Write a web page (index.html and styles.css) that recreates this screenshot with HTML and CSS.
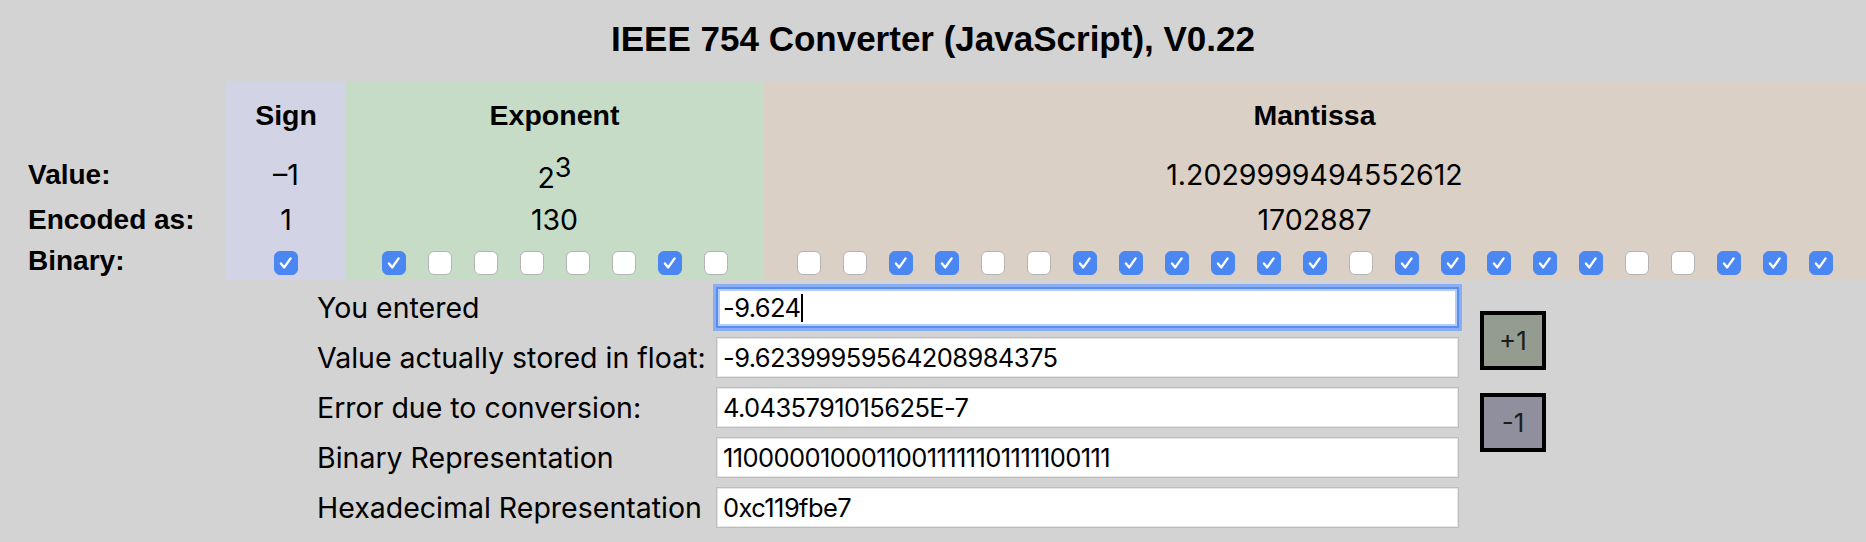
FILE: index.html
```html
<!DOCTYPE html>
<html lang="en">
<head>
<meta charset="utf-8">
<title>IEEE 754 Converter</title>
<link rel="stylesheet" href="styles.css">
</head>
<body>
<h1 class="title">IEEE 754 Converter (JavaScript), V0.22</h1>

<div class="bits">
  <div class="lbl"></div>
  <div class="cell sign head">Sign</div>
  <div class="cell exp head">Exponent</div>
  <div class="cell man head">Mantissa</div>

  <div class="lbl value">Value:</div>
  <div class="cell sign value">&ndash;1</div>
  <div class="cell exp value pow">2<sup>3</sup></div>
  <div class="cell man value">1.2029999494552612</div>

  <div class="lbl enc">Encoded as:</div>
  <div class="cell sign enc">1</div>
  <div class="cell exp enc">130</div>
  <div class="cell man enc">1702887</div>

  <div class="lbl bin">Binary:</div>
  <div class="cell sign bin">
    <span class="cb on"><svg viewBox="0 0 24 24"><path d="M6.5 12.5l3.6 4.3L17 7"/></svg></span>
  </div>
  <div class="cell exp bin">
    <span class="cb on"><svg viewBox="0 0 24 24"><path d="M6.5 12.5l3.6 4.3L17 7"/></svg></span>
    <span class="cb"></span>
    <span class="cb"></span>
    <span class="cb"></span>
    <span class="cb"></span>
    <span class="cb"></span>
    <span class="cb on"><svg viewBox="0 0 24 24"><path d="M6.5 12.5l3.6 4.3L17 7"/></svg></span>
    <span class="cb"></span>
  </div>
  <div class="cell man bin">
    <span class="cb"></span>
    <span class="cb"></span>
    <span class="cb on"><svg viewBox="0 0 24 24"><path d="M6.5 12.5l3.6 4.3L17 7"/></svg></span>
    <span class="cb on"><svg viewBox="0 0 24 24"><path d="M6.5 12.5l3.6 4.3L17 7"/></svg></span>
    <span class="cb"></span>
    <span class="cb"></span>
    <span class="cb on"><svg viewBox="0 0 24 24"><path d="M6.5 12.5l3.6 4.3L17 7"/></svg></span>
    <span class="cb on"><svg viewBox="0 0 24 24"><path d="M6.5 12.5l3.6 4.3L17 7"/></svg></span>
    <span class="cb on"><svg viewBox="0 0 24 24"><path d="M6.5 12.5l3.6 4.3L17 7"/></svg></span>
    <span class="cb on"><svg viewBox="0 0 24 24"><path d="M6.5 12.5l3.6 4.3L17 7"/></svg></span>
    <span class="cb on"><svg viewBox="0 0 24 24"><path d="M6.5 12.5l3.6 4.3L17 7"/></svg></span>
    <span class="cb on"><svg viewBox="0 0 24 24"><path d="M6.5 12.5l3.6 4.3L17 7"/></svg></span>
    <span class="cb"></span>
    <span class="cb on"><svg viewBox="0 0 24 24"><path d="M6.5 12.5l3.6 4.3L17 7"/></svg></span>
    <span class="cb on"><svg viewBox="0 0 24 24"><path d="M6.5 12.5l3.6 4.3L17 7"/></svg></span>
    <span class="cb on"><svg viewBox="0 0 24 24"><path d="M6.5 12.5l3.6 4.3L17 7"/></svg></span>
    <span class="cb on"><svg viewBox="0 0 24 24"><path d="M6.5 12.5l3.6 4.3L17 7"/></svg></span>
    <span class="cb on"><svg viewBox="0 0 24 24"><path d="M6.5 12.5l3.6 4.3L17 7"/></svg></span>
    <span class="cb"></span>
    <span class="cb"></span>
    <span class="cb on"><svg viewBox="0 0 24 24"><path d="M6.5 12.5l3.6 4.3L17 7"/></svg></span>
    <span class="cb on"><svg viewBox="0 0 24 24"><path d="M6.5 12.5l3.6 4.3L17 7"/></svg></span>
    <span class="cb on"><svg viewBox="0 0 24 24"><path d="M6.5 12.5l3.6 4.3L17 7"/></svg></span>
  </div>
</div>

<div class="lower">
  <div class="form">
    <div class="flabel">You entered</div>
    <div class="field focus">-9.624<span class="caret"></span></div>
    <div class="flabel">Value actually stored in float:</div>
    <div class="field">-9.62399959564208984375</div>
    <div class="flabel">Error due to conversion:</div>
    <div class="field">4.0435791015625E-7</div>
    <div class="flabel">Binary Representation</div>
    <div class="field">11000001000110011111101111100111</div>
    <div class="flabel">Hexadecimal Representation</div>
    <div class="field">0xc119fbe7</div>
  </div>
  <div class="buttons">
    <div class="btn plus">+1</div>
    <div class="btn minus">-1</div>
  </div>
</div>
</body>
</html>
```

FILE: styles.css
```css
html, body {
  margin: 0;
  padding: 0;
}
body {
  background: #d3d3d3;
  color: #000;
  font-family: "Inter", "Liberation Sans", Arial, sans-serif;
  width: 1866px;
  overflow: hidden;
}

.title {
  margin: 0;
  padding-top: 19px;
  height: 81px;
  box-sizing: border-box;
  font-family: "Liberation Sans", Arial, sans-serif;
  font-weight: bold;
  font-size: 35px;
  line-height: 39px;
  text-align: center;
}

.bits {
  display: grid;
  grid-template-columns: 226px 120px 417px 1fr;
  grid-template-rows: 69px 49px 42px 39px;
}

.lbl {
  padding-left: 28px;
  font-family: "Liberation Sans", Arial, sans-serif;
  font-weight: bold;
  font-size: 28px;
}
.lbl.value { line-height: 49px; }
.lbl.enc { line-height: 42px; }
.lbl.bin { line-height: 39px; }

.cell {
  text-align: center;
  font-size: 28.5px;
}
.sign { background: #d2d3e4; }
.exp { background: #c6dcc6; }
.man { background: #dad0c6; }

.cell.head {
  font-family: "Liberation Sans", Arial, sans-serif;
  font-weight: bold;
  font-size: 28.5px;
  line-height: 69px;
}
.cell.value { line-height: 49px; }
.cell.enc { line-height: 42px; }
.cell.pow { padding-top: 3px; box-sizing: border-box; }
.cell.pow sup {
  font-size: 27px;
  line-height: 0;
  vertical-align: 11px;
}

.cell.bin {
  display: flex;
  justify-content: center;
  align-items: flex-start;
  gap: 22px;
  padding-top: 10px;
  box-sizing: border-box;
}

.cb {
  width: 24px;
  height: 24px;
  box-sizing: border-box;
  border-radius: 6px;
  background: #fff;
  border: 1px solid #b4b4b4;
  flex: none;
  display: block;
}
.cb.on {
  background: #4a87f2;
  border-color: #4a87f2;
}
.cb svg {
  display: block;
  width: 22px;
  height: 22px;
  fill: none;
  stroke: #fff;
  stroke-width: 2.6;
  stroke-linecap: round;
  stroke-linejoin: round;
}

.lower {
  display: flex;
  align-items: flex-start;
  gap: 21px;
  padding: 7px 0 0 317px;
}

.form {
  display: grid;
  grid-template-columns: 399px 743px;
  grid-auto-rows: 41px;
  row-gap: 9px;
}

.flabel {
  font-size: 28.5px;
  line-height: 41px;
  white-space: nowrap;
}

.field {
  background: #fff;
  border: 1px solid #bdbdbd;
  box-shadow: inset 0 0 0 1px #e6e6e6;
  box-sizing: border-box;
  padding-left: 6px;
  font-size: 25.5px;
  letter-spacing: -0.6px;
  line-height: 39px;
  white-space: nowrap;
  overflow: hidden;
}
.field.focus {
  border: 2px solid #5a8def;
  box-shadow: 0 0 0 3px #8aaef3, inset 0 0 0 2px #b6cdf7;
  padding-left: 5px;
  line-height: 37px;
}
.caret {
  display: inline-block;
  width: 2px;
  height: 28px;
  background: #000;
  vertical-align: -5px;
  margin-left: 1px;
}

.buttons {
  display: flex;
  flex-direction: column;
  gap: 23px;
  padding-top: 24px;
}
.btn {
  width: 66px;
  height: 59px;
  box-sizing: border-box;
  border: 4px solid #000;
  font-size: 26px;
  line-height: 51px;
  text-align: center;
  color: #1c1c1c;
}
.btn.plus { background: #949c90; }
.btn.minus { background: #908f9d; }
```
